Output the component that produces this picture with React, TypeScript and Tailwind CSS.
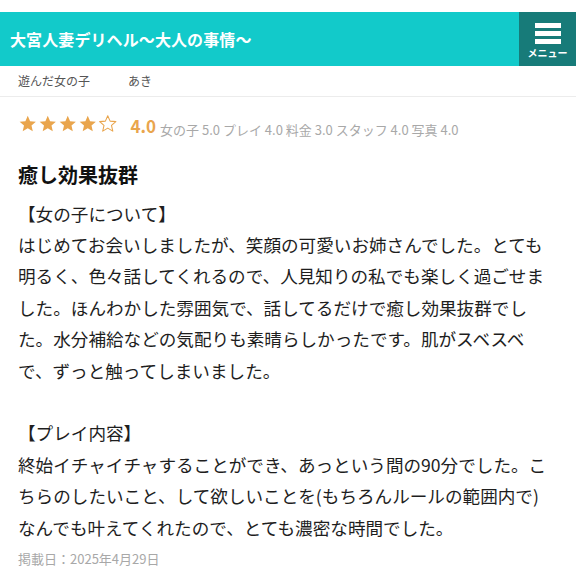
import React from 'react';

const FONT = { fontFamily: '"Noto Sans CJK JP", "Noto Sans", sans-serif' };

const Star = ({ filled }: { filled: boolean }) => (
  <svg width="19.5" height="19.5" viewBox="0 0 24 24" className="shrink-0">
    <path
      d="M12 2.2l2.9 6.6 7.1.6-5.4 4.7 1.6 7-6.2-3.7-6.2 3.7 1.6-7L2 9.4l7.1-.6z"
      fill={filled ? '#e9a54d' : 'none'}
      stroke="#e9a54d"
      strokeWidth={filled ? 0 : 1.3}
      strokeLinejoin="round"
    />
  </svg>
);

export default function App() {
  const scores = [
    ['女の子', '5.0'],
    ['プレイ', '4.0'],
    ['料金', '3.0'],
    ['スタッフ', '4.0'],
    ['写真', '4.0'],
  ];

  return (
    <div className="w-[576px] h-[574px] bg-white overflow-hidden pt-[12px]" style={FONT}>
      {/* Header */}
      <header className="flex h-[54px] bg-[#12caca]">
        <h1 className="flex-1 flex items-center pl-[10px] text-white font-bold text-[16px] tracking-[0.1px]">
          大宮人妻デリヘル〜大人の事情〜
        </h1>
        <button className="w-[57px] bg-[#177b79] flex flex-col items-center justify-center gap-[4px] pt-[2px]">
          <div className="flex flex-col gap-[3px]">
            <span className="block w-[26px] h-[5px] bg-white" />
            <span className="block w-[26px] h-[5px] bg-white" />
            <span className="block w-[26px] h-[5px] bg-white" />
          </div>
          <span className="text-white font-bold text-[10px] leading-none">メニュー</span>
        </button>
      </header>

      {/* Girl row */}
      <div className="flex items-center h-[31px] px-[18px] border-b border-[#ececec] text-[12px] text-[#555]">
        <span className="w-[110px]">遊んだ女の子</span>
        <span>あき</span>
      </div>

      {/* Rating */}
      <div className="flex items-end px-[18px] pt-[17px]">
        <div className="flex gap-[0.5px] pb-[3px]">
          <Star filled />
          <Star filled />
          <Star filled />
          <Star filled />
          <Star filled={false} />
        </div>
        <span className="ml-[13px] text-[17px] font-bold text-[#e9a54d] leading-none pb-[3px]">4.0</span>
        <span className="ml-[4px] text-[13px] text-[#a8a8a8] leading-none pb-[1px]">
          {scores.map(([k, v]) => `${k} ${v}`).join(' ')}
        </span>
      </div>

      {/* Title */}
      <h2 className="px-[18px] mt-[28px] text-[20px] font-bold text-[#111] leading-none">癒し効果抜群</h2>

      {/* Body */}
      <div className="pl-[18px] pr-[22px] mt-[13px] text-[17.6px] leading-[31.4px] text-[#1e1e1e]">
        <p>【女の子について】</p>
        <p>
          はじめてお会いしましたが、笑顔の可愛いお姉さんでした。とても明るく、色々話してくれるので、人見知りの私でも楽しく過ごせました。ほんわかした雰囲気で、話してるだけで癒し効果抜群でした。水分補給などの気配りも素晴らしかったです。肌がスベスベで、ずっと触ってしまいました。
        </p>
        <p>&nbsp;</p>
        <p>【プレイ内容】</p>
        <p>
          終始イチャイチャすることができ、あっという間の90分でした。こちらのしたいこと、して欲しいことを(もちろんルールの範囲内で)なんでも叶えてくれたので、とても濃密な時間でした。
        </p>
      </div>

      <div className="px-[18px] mt-[6px] text-[13px] text-[#a8a8a8]">掲載日：2025年4月29日</div>
    </div>
  );
}
